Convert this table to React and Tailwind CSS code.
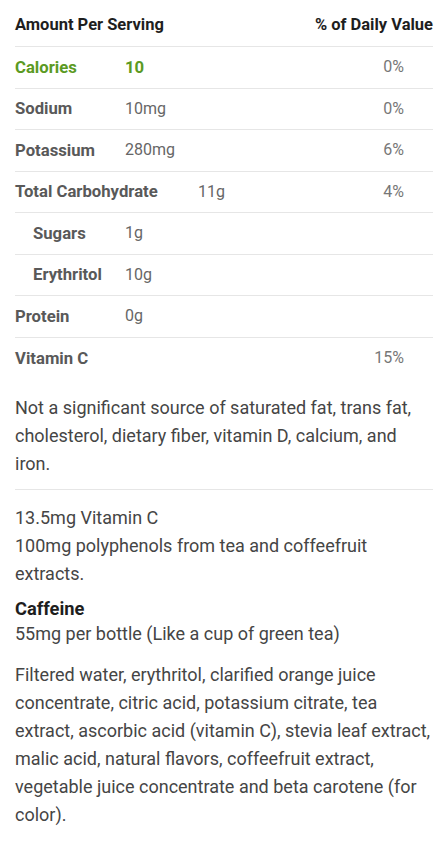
import React from 'react';

const rows = [
    { name: 'Calories', value: '10', dv: '0%', green: true },
    { name: 'Sodium', value: '10mg', dv: '0%' },
    { name: 'Potassium', value: '280mg', dv: '6%' },
    { name: 'Total Carbohydrate', value: '11g', dv: '4%', wide: true },
    { name: 'Sugars', value: '1g', sub: true },
    { name: 'Erythritol', value: '10g', sub: true },
    { name: 'Protein', value: '0g' },
    { name: 'Vitamin C', value: '', dv: '15%', last: true },
];

const App = () => {
    return (
        <div className="w-[448px] min-h-[842px] bg-white px-[15px] text-[#454545]" style={{ fontFamily: 'Roboto, "Noto Sans", sans-serif' }}>
            {/* Header */}
            <div className="flex justify-between items-center h-[47px] pt-[5px] border-b border-[#e6e6e6] text-[16.5px] font-bold text-[#1e1e1e]">
                <span>Amount Per Serving</span>
                <span>% of Daily Value</span>
            </div>

            {rows.map(r => (
                <div
                    key={r.name}
                    className={`flex items-center h-[41.5px] text-[16px] ${r.last ? '' : 'border-b border-[#e6e6e6]'}`}
                >
                    <span
                        className={`shrink-0 font-bold text-[16.7px] ${r.wide ? 'w-[183px]' : 'w-[110px]'} ${r.sub ? 'pl-[18px]' : ''} ${r.green ? 'text-[#5b9a23]' : 'text-[#595959]'}`}
                    >
                        {r.name}
                    </span>
                    <span className={`flex-1 ${r.green ? 'font-bold text-[16.7px] text-[#5b9a23]' : 'text-[#666666]'}`}>{r.value}</span>
                    <span className="pr-[29px] text-[#777777]">{r.dv}</span>
                </div>
            ))}

            {/* Footnote */}
            <p className="mt-[15px] pb-[11px] border-b border-[#e6e6e6] text-[18px] leading-[28px]">
                Not a significant source of saturated fat, trans fat, cholesterol, dietary fiber, vitamin D, calcium, and iron.
            </p>

            <div className="pt-[14px] text-[18px] leading-[28px]">
                <p>13.5mg Vitamin C</p>
                <p>100mg polyphenols from tea and coffeefruit extracts.</p>
            </div>

            <div className="mt-[10px]">
                <h3 className="text-[18.3px] leading-[22px] font-bold text-[#1e1e1e]">Caffeine</h3>
                <p className="text-[18px] leading-[28px]">55mg per bottle (Like a cup of green tea)</p>
            </div>

            <p className="mt-[13px] text-[18px] leading-[28px]">
                Filtered water, erythritol, clarified orange juice concentrate, citric acid, potassium citrate, tea extract, ascorbic acid (vitamin C), stevia leaf extract, malic acid, natural flavors, coffeefruit extract, vegetable juice concentrate and beta carotene (for color).
            </p>
        </div>
    );
};

export default App;
